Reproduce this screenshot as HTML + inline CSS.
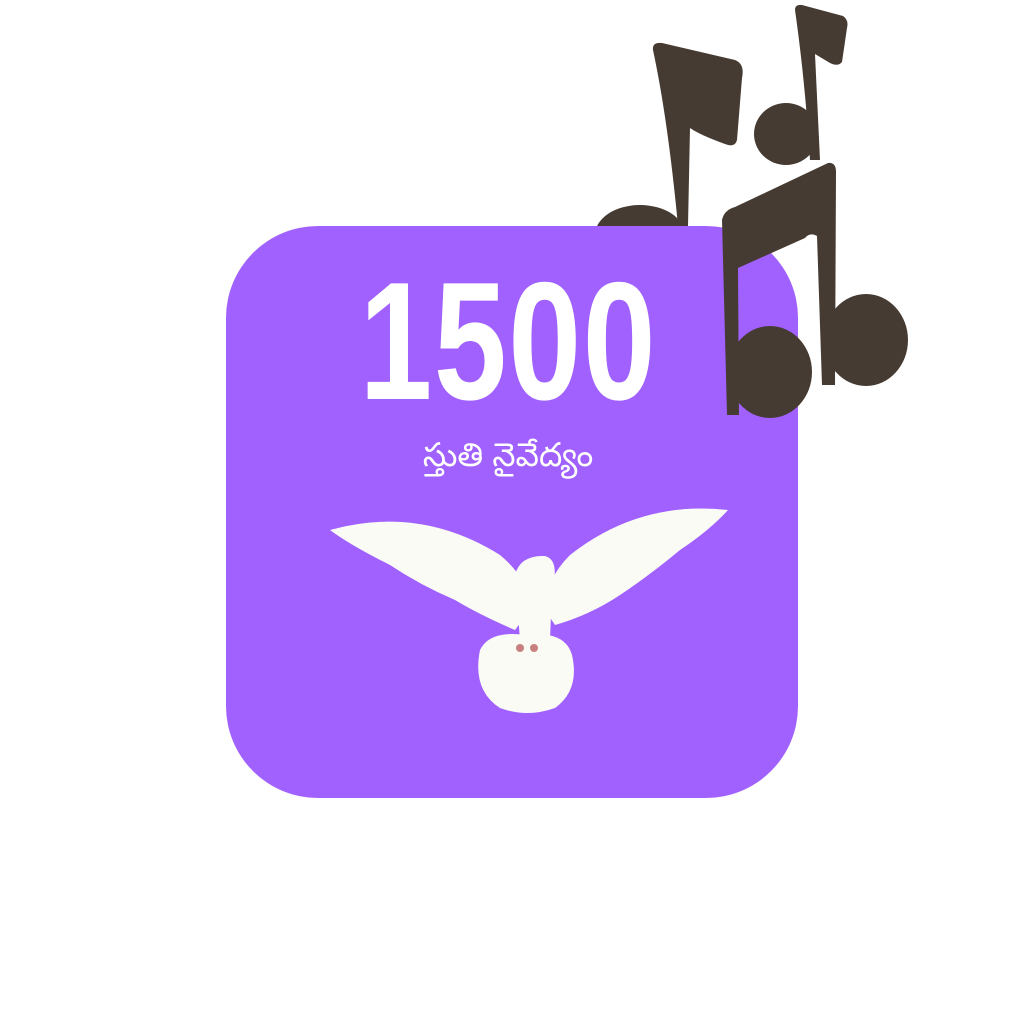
<!DOCTYPE html>
<html><head><meta charset="utf-8"><style>
html,body{margin:0;padding:0;background:#fff;width:1024px;height:1024px;overflow:hidden;position:relative}
.sq{position:absolute;left:226px;top:226px;width:572px;height:572px;border-radius:92px;background:#a061fe}
.num{position:absolute;left:343px;top:257px;width:340px;text-align:center;color:#fff;font:bold 168px/1 "Liberation Sans",sans-serif;transform:scaleX(0.78);transform-origin:center;letter-spacing:2px;margin-left:-21px}
.tel{position:absolute;left:370px;top:436px;width:276px;text-align:center;color:#fff;font:33px "Liberation Sans","Noto Sans Telugu",sans-serif}
svg{position:absolute;left:0;top:0}
</style></head><body>
<svg width="1024" height="1024">
<g fill="#463b32">
<path d="M653,50 Q652,42 662,43 L735,60 Q745,64 742,78 L737,140 Q735,148 725,144 Q700,135 690,128 L688,226 L678,226 Q668,120 653,50 Z"/>
<ellipse cx="640" cy="235" rx="45" ry="30"/>
<path d="M795,10 Q795,4 802,5 L843,16 Q849,20 847,28 L842,62 Q838,67 830,63 L815,54 L820,160 L810,160 Q805,80 795,10 Z"/>
<ellipse cx="786" cy="134" rx="32" ry="31"/>
</g>
</svg>
<div class="sq"></div>
<div class="num">1500</div>
<div class="tel">స్తుతి నైవేద్యం</div>
<svg width="1024" height="1024">
<g fill="#463b32">
<path d="M722,220 Q724,210 735,207 L828,163 Q836,162 836,172 L835,385 L822,385 L817,236 Q810,232 805,238 L738,268 L739,415 L727,415 Z"/>
<ellipse cx="770" cy="372" rx="42" ry="46"/>
<ellipse cx="866" cy="340" rx="42" ry="46"/>
</g>
<g fill="#fbfbf6">
<path d="M330,530 Q420,505 500,555 Q530,580 530,610 L515,630 Q480,615 455,600 Q420,585 390,565 Q350,545 330,530 Z"/>
<path d="M728,510 Q640,500 570,555 Q545,580 545,610 L555,625 Q590,615 620,595 Q650,575 680,550 Q710,530 728,510 Z"/>
<path d="M515,575 Q520,555 545,556 Q560,560 552,590 L550,640 Q535,660 520,640 Z"/>
<path d="M480,650 Q490,630 525,635 Q565,630 572,655 Q580,690 555,708 Q527,718 500,708 Q472,690 480,650 Z"/>
</g>
<circle cx="520" cy="648" r="4" fill="#c98080"/>
<circle cx="534" cy="648" r="4" fill="#c98080"/>
</svg>
</body></html>
